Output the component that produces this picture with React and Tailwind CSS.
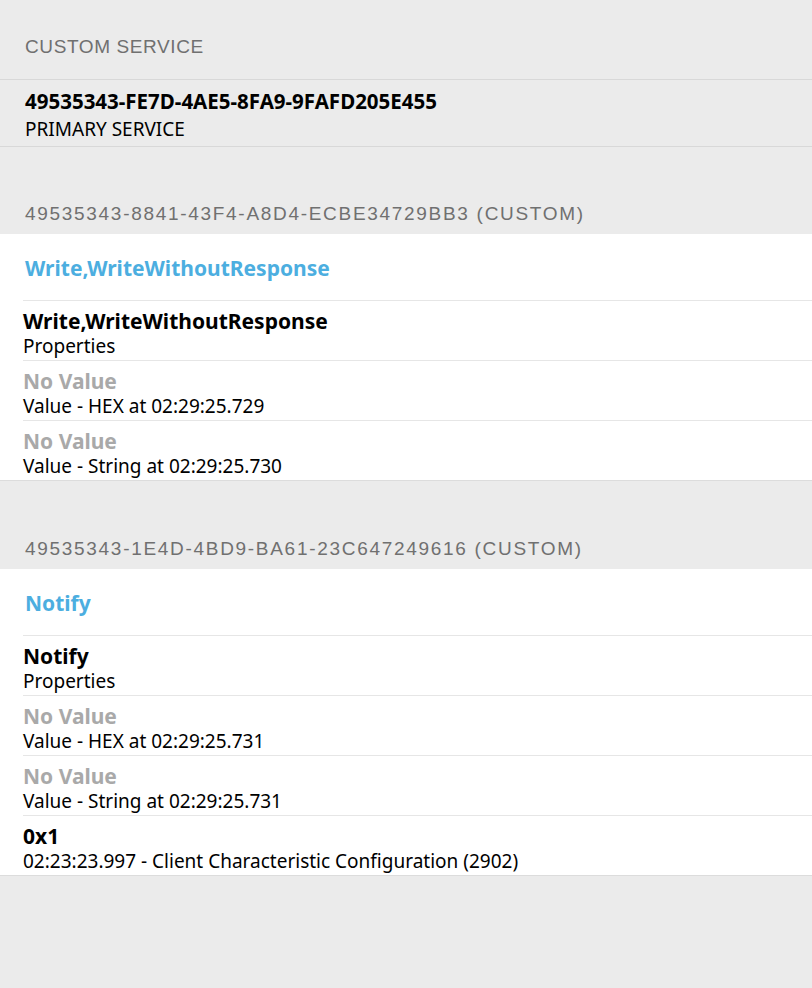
import React from 'react';

const Row = ({ title, sub, muted }) => (
    <div className="ml-[23px] h-[60px] border-t border-[#e6e6e6] flex flex-col justify-center pt-[7px]">
        <div className={`text-[21px] leading-[25px] font-bold ${muted ? 'text-[#a9a9a9]' : 'text-black'}`}>{title}</div>
        <div className="text-[19px] leading-[25px] text-black">{sub}</div>
    </div>
);

const Characteristic = ({ uuid, name, rows, gap }) => (
    <div>
        <div className={`${gap} flex items-end pb-[6px] px-[25px]`}>
            <span className="font-['Liberation_Sans',sans-serif] text-[19px] tracking-[1.7px] text-[#707070]">{uuid}</span>
        </div>
        <div className="bg-white border-b border-[#dcdcdc]">
            <div className="h-[66px] flex items-center px-[25px] pt-[4px]">
                <span className="text-[21px] font-bold text-[#4caee0]">{name}</span>
            </div>
            {rows.map((r, i) => (
                <Row key={i} {...r} />
            ))}
        </div>
    </div>
);

export default function App() {
    return (
        <div className="w-[812px] h-[988px] bg-[#ebebeb] font-['Noto_Sans',sans-serif] overflow-hidden">
            <div className="h-[79px] flex items-center px-[25px] pt-[15px]">
                <span className="font-['Liberation_Sans',sans-serif] text-[19px] tracking-[0.6px] text-[#707070]">CUSTOM SERVICE</span>
            </div>
            <div className="h-[68px] border-y border-[#d8d8d8] flex flex-col justify-center px-[25px] pt-[4px]">
                <div className="text-[20.5px] leading-[28px] font-bold text-black">49535343-FE7D-4AE5-8FA9-9FAFD205E455</div>
                <div className="text-[19px] leading-[28px] text-black">PRIMARY SERVICE</div>
            </div>
            <Characteristic
                gap="h-[87px]"
                uuid="49535343-8841-43F4-A8D4-ECBE34729BB3 (CUSTOM)"
                name="Write,WriteWithoutResponse"
                rows={[
                    { title: 'Write,WriteWithoutResponse', sub: 'Properties' },
                    { title: 'No Value', sub: 'Value - HEX at 02:29:25.729', muted: true },
                    { title: 'No Value', sub: 'Value - String at 02:29:25.730', muted: true },
                ]}
            />
            <Characteristic
                gap="h-[88px]"
                uuid="49535343-1E4D-4BD9-BA61-23C647249616 (CUSTOM)"
                name="Notify"
                rows={[
                    { title: 'Notify', sub: 'Properties' },
                    { title: 'No Value', sub: 'Value - HEX at 02:29:25.731', muted: true },
                    { title: 'No Value', sub: 'Value - String at 02:29:25.731', muted: true },
                    { title: '0x1', sub: '02:23:23.997 - Client Characteristic Configuration (2902)' },
                ]}
            />
        </div>
    );
}
